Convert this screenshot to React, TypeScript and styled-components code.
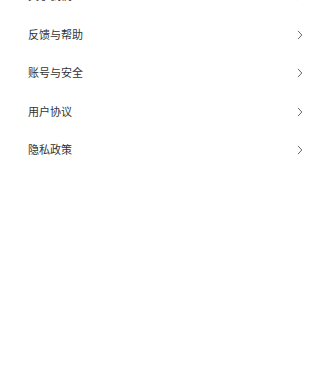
import React from "react";
import styled, { createGlobalStyle } from "styled-components";

const Global = createGlobalStyle`
  html, body { margin: 0; padding: 0; background: #ffffff; }
  body { font-family: "Noto Sans CJK SC", "Noto Sans", sans-serif; }
`;

const Page = styled.div`
  width: 330px;
  height: 368px;
  overflow: hidden;
  background: #ffffff;
`;

const List = styled.ul`
  list-style: none;
  margin: -23.5px 0 0 0;
  padding: 0;
  display: flex;
  flex-direction: column;
`;

const Row = styled.li`
  height: 38.5px;
  display: flex;
  align-items: center;
  justify-content: space-between;
  padding: 0 27px 0 28px;
`;

const Label = styled.span`
  font-size: 11px;
  line-height: 1;
  color: #333333;
  letter-spacing: 0;
`;

const Arrow = styled.svg`
  display: block;
  margin-top: 1px;
`;

const Chevron = () => (
  <Arrow width="6" height="10" viewBox="0 0 6 10" fill="none">
    <path d="M1.3 1.2 L4.8 5 L1.3 8.8" stroke="#666666" strokeWidth="1" strokeLinecap="round" strokeLinejoin="round" />
  </Arrow>
);

const items = ["关于我们", "反馈与帮助", "账号与安全", "用户协议", "隐私政策"];

export default function App() {
  return (
    <Page>
      <Global />
      <List>
        {items.map((t) => (
          <Row key={t}>
            <Label>{t}</Label>
            <Chevron />
          </Row>
        ))}
      </List>
    </Page>
  );
}
